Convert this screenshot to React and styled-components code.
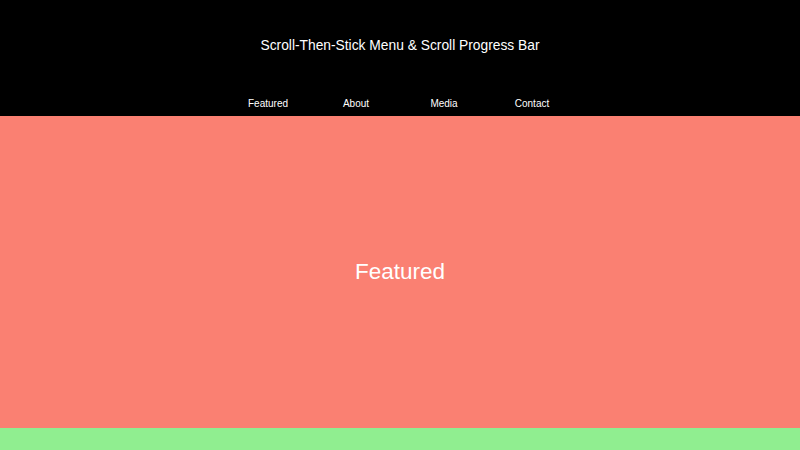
import React from 'react'
import styled, { createGlobalStyle } from 'styled-components';

const GlobalStyle = createGlobalStyle`
  html, body {
    margin: 0;
    padding: 0;
    font-family: "Liberation Sans", Arial, sans-serif;
  }
`;

const Header = styled.header`
  background-color: #000;
  color: #fff;
`;

const Title = styled.h1`
  margin: 0;
  height: 91px;
  display: flex;
  align-items: center;
  justify-content: center;
  font-size: 13.8px;
  font-weight: 400;
`;

const Nav = styled.nav`
  display: flex;
  justify-content: center;
  height: 25px;
`;

const NavItem = styled.a`
  width: 88px;
  text-align: center;
  line-height: 25px;
  font-size: 10px;
  color: #fff;
  text-decoration: none;
  cursor: pointer;
`;

const Section = styled.section`
  height: ${(props) => props.height}px;
  background-color: ${(props) => props.color};
  display: flex;
  align-items: center;
  justify-content: center;
  color: #fff;
  font-size: 22.5px;
`;

const App = () => {
  return (
    <>
      <GlobalStyle />
      <Header>
        <Title>Scroll-Then-Stick Menu &amp; Scroll Progress Bar</Title>
        <Nav>
          <NavItem>Featured</NavItem>
          <NavItem>About</NavItem>
          <NavItem>Media</NavItem>
          <NavItem>Contact</NavItem>
        </Nav>
      </Header>
      <Section color="#fa8072" height={312}>Featured</Section>
      <Section color="#90ee90" height={312}>About</Section>
      <Section color="#87ceeb" height={312}>Media</Section>
      <Section color="#dda0dd" height={312}>Contact</Section>
    </>
  )
}

export default App
